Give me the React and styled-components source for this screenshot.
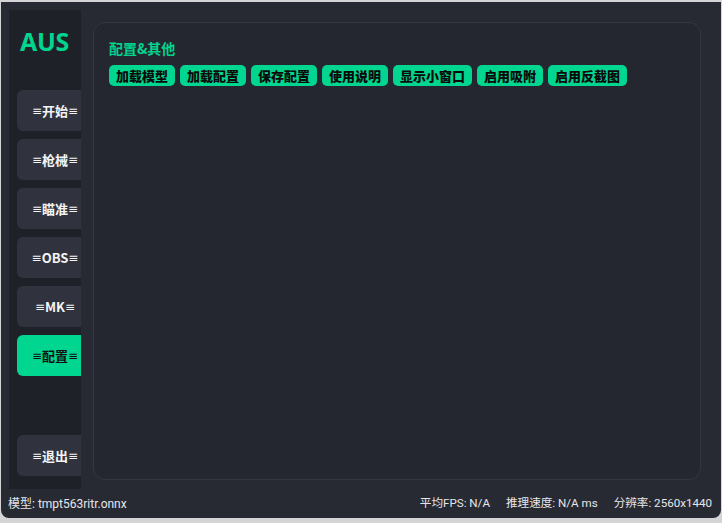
import React from "react";
import styled, { createGlobalStyle } from "styled-components";

const GlobalStyle = createGlobalStyle`
  html, body {
    margin: 0;
    padding: 0;
    background: #d4d4d6;
  }
  body {
    font-family: "Noto Sans", "Noto Sans CJK SC", sans-serif;
  }
`;

const Window = styled.div`
  margin: 2px 1px 0 1px;
  width: 720px;
  height: 516px;
  background: #272a33;
  border-radius: 0 0 8px 8px;
  display: flex;
  flex-direction: column;
  overflow: hidden;
`;

const Main = styled.div`
  flex: 1;
  display: flex;
  padding: 8px 0 0 8px;
  min-height: 0;
`;

const Sidebar = styled.div`
  width: 72px;
  height: 479px;
  background: #1f2128;
  display: flex;
  flex-direction: column;
  padding-left: 8px;
  box-sizing: border-box;
  overflow: hidden;
`;

const Logo = styled.div`
  color: #00d48e;
  font-family: "Noto Sans", sans-serif;
  font-weight: 700;
  font-size: 25px;
  line-height: 30px;
  padding: 16px 0 0 3px;
  height: 80px;
  box-sizing: border-box;
  letter-spacing: -0.3px;
`;

const NavList = styled.div`
  display: flex;
  flex-direction: column;
  gap: 8px;
`;

const NavButton = styled.div`
  flex: none;
  width: 76px;
  height: 41px;
  border-radius: 6px;
  background: ${(p) => (p.$active ? "#00d68f" : "#30333e")};
  color: ${(p) => (p.$active ? "#111" : "#f4f4f4")};
  display: flex;
  align-items: center;
  justify-content: center;
  font-family: "Noto Sans CJK SC", sans-serif;
  font-weight: 700;
  font-size: 13px;
  white-space: nowrap;
`;

const Bars = styled.span`
  font-family: "DejaVu Sans", sans-serif;
  font-weight: 400;
  font-size: 12px;
`;

const ExitButton = styled(NavButton)`
  margin-top: 59px;
`;

const ContentArea = styled.div`
  flex: 1;
  padding: 12px 20px 9px 12px;
  display: flex;
`;

const Panel = styled.div`
  flex: 1;
  height: 458px;
  box-sizing: border-box;
  border: 1px solid #343743;
  border-radius: 12px;
  background: #252730;
  padding: 16px 15px;
`;

const Title = styled.div`
  color: #00d48e;
  font-family: "Noto Sans CJK SC", sans-serif;
  font-weight: 700;
  font-size: 14px;
  line-height: 18px;
`;

const ButtonRow = styled.div`
  display: flex;
  gap: 5px;
  margin-top: 8px;
`;

const ActionButton = styled.button`
  height: 21px;
  padding: 0 7px;
  border: none;
  border-radius: 5px;
  background: #00d68f;
  color: #0a0a0a;
  font-family: "Noto Sans CJK SC", sans-serif;
  font-weight: 900;
  font-size: 13px;
  line-height: 21px;
  cursor: pointer;
`;

const StatusBar = styled.div`
  height: 28px;
  display: flex;
  align-items: center;
  justify-content: space-between;
  padding: 0 9px 2px 7px;
  color: #e6e6ea;
  font-size: 12px;
  font-family: Roboto, "Noto Sans CJK SC", sans-serif;
`;

const StatusGroup = styled.div`
  display: flex;
  gap: 16px;
  font-size: 11.6px;
`;

const navItems = ["开始", "枪械", "瞄准", "OBS", "MK", "配置"];
const actions = ["加载模型", "加载配置", "保存配置", "使用说明", "显示小窗口", "启用吸附", "启用反截图"];

const NavLabel = ({ text }) => (
  <>
    <Bars>≡</Bars>
    {text}
    <Bars>≡</Bars>
  </>
);

const App = () => {
  return (
    <>
      <GlobalStyle />
      <Window>
        <Main>
          <Sidebar>
            <Logo>AUS</Logo>
            <NavList>
              {navItems.map((item) => (
                <NavButton key={item} $active={item === "配置"}>
                  <NavLabel text={item} />
                </NavButton>
              ))}
            </NavList>
            <ExitButton>
              <NavLabel text="退出" />
            </ExitButton>
          </Sidebar>
          <ContentArea>
            <Panel>
              <Title>配置&其他</Title>
              <ButtonRow>
                {actions.map((a) => (
                  <ActionButton key={a}>{a}</ActionButton>
                ))}
              </ButtonRow>
            </Panel>
          </ContentArea>
        </Main>
        <StatusBar>
          <span>模型: tmpt563ritr.onnx</span>
          <StatusGroup>
            <span>平均FPS: N/A</span>
            <span>推理速度: N/A ms</span>
            <span>分辨率: 2560x1440</span>
          </StatusGroup>
        </StatusBar>
      </Window>
    </>
  );
};

export default App;
